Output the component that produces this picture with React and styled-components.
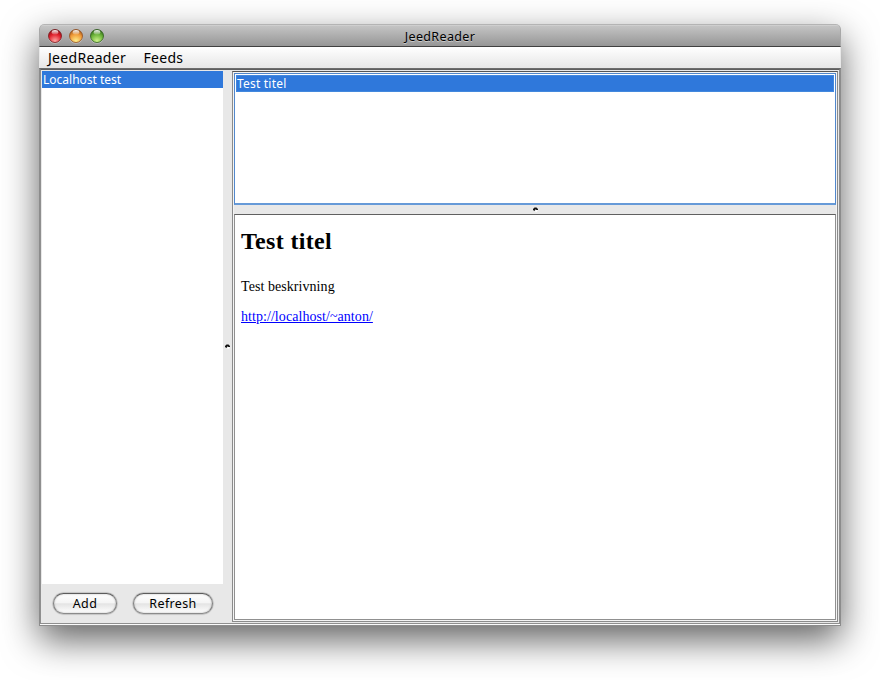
import React from "react";
import styled, { createGlobalStyle } from "styled-components";

const Global = createGlobalStyle`
  * { box-sizing: border-box; }
  html, body { margin: 0; background: #fff; }
  body { width: 880px; height: 680px; overflow: hidden; }
`;

const uiFont = `"Noto Sans", "Open Sans", sans-serif`;

const Desktop = styled.div`
  width: 880px;
  height: 680px;
  padding: 24px 39px 54px 39px;
  font-family: ${uiFont};
  color: #000;
`;

const Window = styled.main`
  width: 802px;
  height: 602px;
  display: flex;
  flex-direction: column;
  border-radius: 5px 5px 0 0;
  box-shadow: 0 14px 36px rgba(0, 0, 0, 0.62);
  overflow: hidden;
  background: #e8e8e8;
`;

const TitleBar = styled.header`
  height: 23px;
  flex: none;
  display: grid;
  grid-template-columns: 80px 1fr 80px;
  border: 1px solid #a8a8a8;
  border-top-color: #b4b4b4;
  border-bottom-color: #404040;
  border-radius: 5px 5px 0 0;
  background: linear-gradient(#d9d9d9 0, #c4c4c4 1px, #969696 100%);
`;

const Lights = styled.div`
  display: flex;
  gap: 5px;
  padding: 3px 0 0 7px;
`;

const LightIcon = styled.svg`
  width: 16px;
  height: 16px;
  flex: none;
  display: block;
`;

const Title = styled.h1`
  margin: 0;
  padding-top: 1px;
  font-size: 12.5px;
  font-weight: 400;
  line-height: 22px;
  letter-spacing: 0.35px;
  text-align: center;
  text-shadow: 0 1px 0 rgba(255, 255, 255, 0.45);
  white-space: nowrap;
`;

const MenuBar = styled.nav`
  height: 21px;
  flex: none;
  display: flex;
  gap: 17.5px;
  padding-left: 8px;
  margin: 0 1px;
  background: linear-gradient(#fff, #e6e6e6);
`;

const MenuItem = styled.span`
  font-size: 14px;
  line-height: 21px;
  letter-spacing: 0.3px;
  white-space: nowrap;
`;

const Frame = styled.div`
  flex: 1;
  min-height: 0;
  display: flex;
  padding-bottom: 1px;
  border: 1px solid #8c8c8c;
  border-top: 1px solid #6c6c6c;
  background: #fafafa;
`;

const Inner = styled.div`
  flex: 1;
  min-width: 0;
  display: flex;
  border: 1px solid #8f8f8f;
  border-top-color: #5e5e5e;
  background: #e8e8e8;
`;

const Sidebar = styled.aside`
  width: 182px;
  flex: none;
  display: flex;
  flex-direction: column;
  padding: 1px 0 0 1px;
`;

const FeedList = styled.div`
  height: 513px;
  background: #fff;
`;

const Row = styled.div`
  height: 17px;
  font-size: 12px;
  line-height: ${(p) => (p.$focused ? 16 : 18)}px;
  letter-spacing: ${(p) => (p.$focused ? 0.2 : 0)}px;
  padding-left: ${(p) => (p.$focused ? 0 : 1)}px;
  color: #fff;
  background: #2f78db;
  border: ${(p) => (p.$focused ? "1px solid #4388dd" : "0")};
  white-space: nowrap;
`;

const Actions = styled.div`
  display: flex;
  gap: 16px;
  padding: 9px 0 0 11px;
`;

const Button = styled.button`
  width: ${(p) => p.$width}px;
  height: 21px;
  padding: 0;
  border: 1.5px solid #777;
  border-color: #5c5c5c #808080 #8b8b8b;
  border-radius: 11px;
  background: linear-gradient(#fff 0, #f5f5f5 45%, #e4e4e4 52%, #fff 100%);
  box-shadow: 0 0 1px 0.5px rgba(0, 0, 0, 0.28), inset 0 0 2px rgba(0, 0, 0, 0.3);
  font: 12.5px/18px ${uiFont};
  letter-spacing: 0.35px;
  color: #000;
`;

const Divider = styled.div`
  flex: none;
  display: flex;
  align-items: center;
  justify-content: center;
  background: #e8e8e8;
  ${(p) => (p.$vertical ? "width: 9px;" : "height: 9px;")}
`;

const Dimple = styled.svg`
  width: 5px;
  height: 5px;
  display: block;
`;

const SplitFrame = styled.section`
  flex: 1;
  min-width: 0;
  height: 551px;
  margin: 1px 1px 0 0;
  display: flex;
  flex-direction: column;
  border: 1px solid #8b8b8b;
  border-top-color: #555;
  padding: 1px;
  background: #f4f4f4;
`;

const ItemList = styled.div`
  height: 132px;
  flex: none;
  border: 1px solid #5288cc;
  border-bottom: 2px solid #669ad8;
  padding: 1px;
  background: #fff;
`;

const Article = styled.article`
  flex: 1;
  min-height: 0;
  border: 1px solid #909090;
  border-top-color: #606060;
  padding: 12px 6px;
  background: #fff;
  font-family: "Liberation Serif", serif;
  font-size: 14px;
  line-height: 16px;
  letter-spacing: 0.06px;
`;

const Heading = styled.h2`
  margin: 0 0 23px;
  font-size: 24px;
  line-height: 29px;
  font-weight: 700;
  letter-spacing: 0.32px;
`;

const Paragraph = styled.p`
  margin: 0 0 14px;
`;

const Link = styled.a`
  color: #0000ff;
  text-decoration: underline;
`;

const lights = [
  { id: "close", edge: "#6f0d12", mid: "#e01f2b", low: "#ffa7a4" },
  { id: "minimize", edge: "#8a4414", mid: "#f09a38", low: "#fff08c" },
  { id: "zoom", edge: "#235412", mid: "#6ab238", low: "#cff58c" },
];

function Light({ id, edge, mid, low }) {
  return (
    <LightIcon viewBox="0 0 16 16">
      <defs>
        <radialGradient id={id} cx=".5" cy=".88" r=".95">
          <stop offset="0" stopColor={low} />
          <stop offset=".55" stopColor={mid} />
          <stop offset="1" stopColor={edge} />
        </radialGradient>
        <linearGradient id={`${id}-shine`} x2="0" y2="1">
          <stop offset="0" stopColor="#fff" stopOpacity=".95" />
          <stop offset="1" stopColor="#fff" stopOpacity=".15" />
        </linearGradient>
      </defs>
      <circle cx="8" cy="8.7" r="7" fill="#fff" opacity=".35" />
      <circle cx="8" cy="8" r="6.5" fill={`url(#${id})`} stroke={edge} strokeOpacity=".75" />
      <ellipse cx="8" cy="4.3" rx="3.3" ry="2.3" fill={`url(#${id}-shine)`} />
    </LightIcon>
  );
}

function DividerMark() {
  return (
    <Dimple viewBox="0 0 5 5">
      <path d="M0 3V2L1.5.5H3.5L5 2V3H3.5L2.5 2.3 1.5 4Z" fill="#111" />
      <path d="M2 4.5 3 3H4.5V4L3.5 5Z" fill="#fff" />
    </Dimple>
  );
}

export default function App() {
  return (
    <>
      <Global />
      <Desktop>
        <Window>
          <TitleBar>
            <Lights>
              {lights.map((l) => (
                <Light key={l.id} {...l} />
              ))}
            </Lights>
            <Title>JeedReader</Title>
          </TitleBar>
          <MenuBar>
            <MenuItem>JeedReader</MenuItem>
            <MenuItem>Feeds</MenuItem>
          </MenuBar>
          <Frame>
            <Inner>
              <Sidebar>
                <FeedList>
                  <Row>Localhost test</Row>
                </FeedList>
                <Actions>
                  <Button $width={64}>Add</Button>
                  <Button $width={80}>Refresh</Button>
                </Actions>
              </Sidebar>
              <Divider $vertical>
                <DividerMark />
              </Divider>
              <SplitFrame>
                <ItemList>
                  <Row $focused>Test titel</Row>
                </ItemList>
                <Divider>
                  <DividerMark />
                </Divider>
                <Article>
                  <Heading>Test titel</Heading>
                  <Paragraph>Test beskrivning</Paragraph>
                  <Paragraph>
                    <Link href="#">http://localhost/~anton/</Link>
                  </Paragraph>
                </Article>
              </SplitFrame>
            </Inner>
          </Frame>
        </Window>
      </Desktop>
    </>
  );
}
